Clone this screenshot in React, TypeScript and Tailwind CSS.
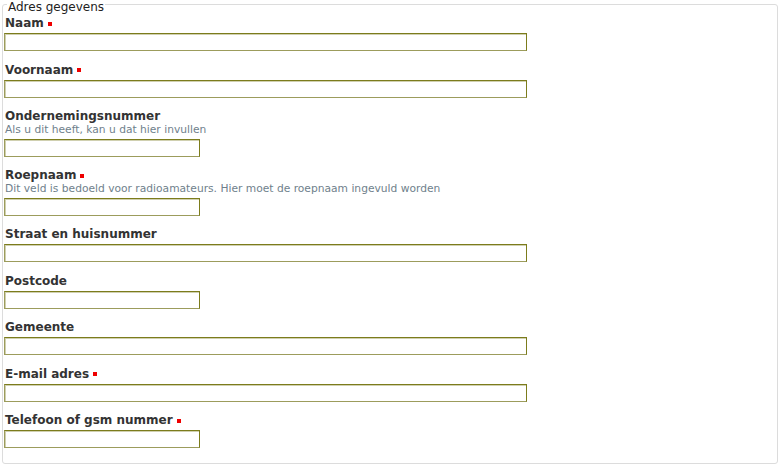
import React from "react";

type Field = { label: string; req?: boolean; help?: string; wide: boolean };

const fields: Field[] = [
  { label: "Naam", req: true, wide: true },
  { label: "Voornaam", req: true, wide: true },
  { label: "Ondernemingsnummer", help: "Als u dit heeft, kan u dat hier invullen", wide: false },
  { label: "Roepnaam", req: true, help: "Dit veld is bedoeld voor radioamateurs. Hier moet de roepnaam ingevuld worden", wide: false },
  { label: "Straat en huisnummer", wide: true },
  { label: "Postcode", wide: false },
  { label: "Gemeente", wide: true },
  { label: "E-mail adres", req: true, wide: true },
  { label: "Telefoon of gsm nummer", req: true, wide: false },
];

export default function App() {
  return (
    <div className="w-[780px] h-[465px] bg-white overflow-hidden" style={{ fontFamily: "'DejaVu Sans', sans-serif" }}>
      <fieldset className="mx-[2px] mt-0 border border-[#dcdcdc] rounded-[3px] h-[464px] pl-[1px] pr-0 pb-0 pt-0">
        <legend className="ml-[3px] px-[1px] h-[9px] text-[12px] leading-[15px] text-[#222]">Adres gegevens</legend>
        <div className="flex flex-col gap-[11.5px] pt-[7px]">
          {fields.map((f) => (
            <div key={f.label} className="flex flex-col">
              <div className="flex items-center text-[12px] leading-[15px] font-bold text-[#333] pl-[1px]">
                <span>{f.label}</span>
                {f.req && <span className="ml-[4px] inline-block w-[4px] h-[4px] bg-[#ee0000]" />}
              </div>
              {f.help && (
                <div className="text-[10.7px] leading-[12.5px] text-[#6f7f8c] pl-[1px]">{f.help}</div>
              )}
              <input
                className={`mt-[2px] h-[18px] border border-t-[#7c7c1c] border-r-[#7c7c1c] border-b-[#9c9c5c] border-l-[#9c9c5c] shadow-[inset_1px_1px_0_#d0d0b0] outline-none ${f.wide ? "w-[523px]" : "w-[196px]"}`}
              />
            </div>
          ))}
        </div>
      </fieldset>
    </div>
  );
}
